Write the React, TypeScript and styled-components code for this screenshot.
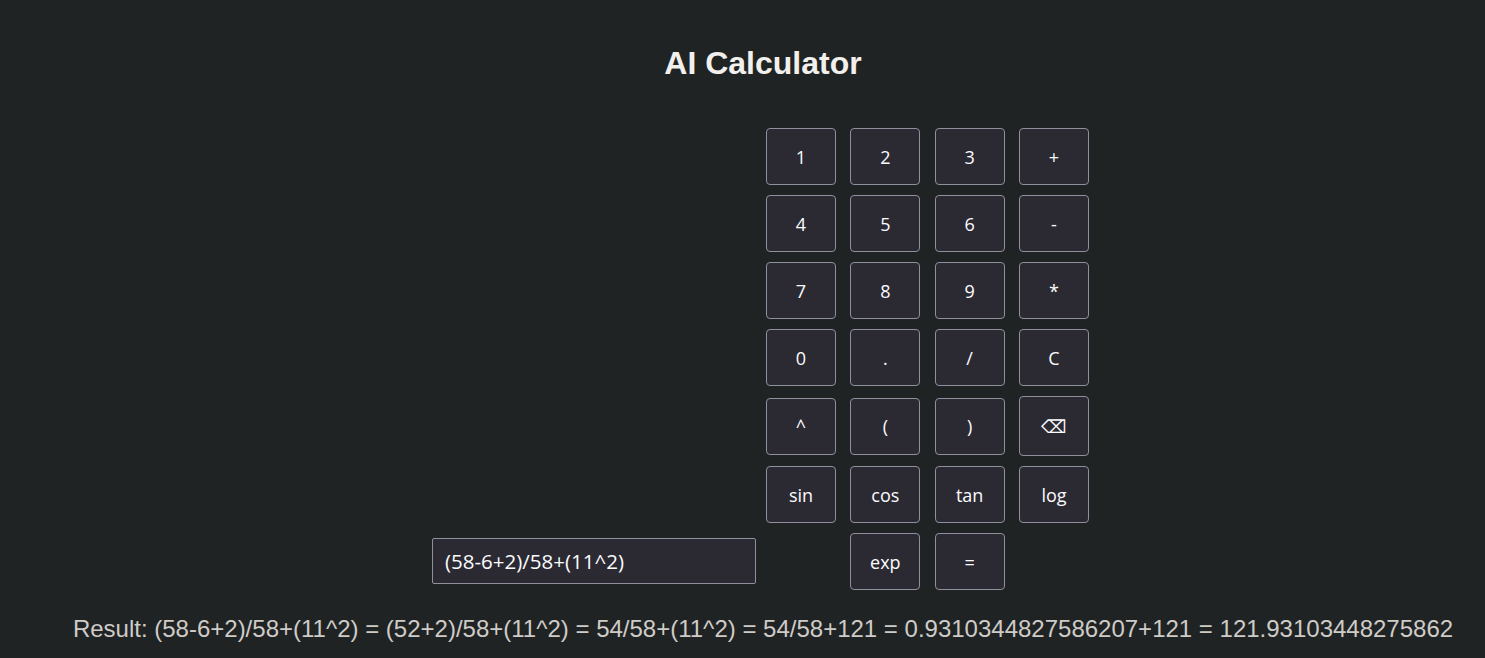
import React from "react";
import styled, { createGlobalStyle } from "styled-components";

const Global = createGlobalStyle`
  html, body { margin: 0; padding: 0; background: #202324; }
  body { font-family: "Liberation Sans", Arial, sans-serif; color: #e8e6e3; }
`;

const Page = styled.div`
  box-sizing: border-box;
  width: 1485px;
  padding: 45px 0 0 41px;
  display: flex;
  flex-direction: column;
  align-items: center;
`;

const Title = styled.h1`
  margin: 0;
  font-size: 32px;
  line-height: 36px;
  font-weight: 700;
  color: #f2f0ed;
`;

const CalcRow = styled.div`
  margin-top: 47px;
  display: flex;
  align-items: flex-end;
  gap: 10px;
  padding-right: 5px;
`;

const Expr = styled.input`
  box-sizing: border-box;
  width: 324px;
  height: 46px;
  margin-bottom: 6px;
  padding: 0 12px;
  background: #2b2a33;
  border: 1px solid #8f8f9d;
  border-radius: 2px;
  color: #fbfbfe;
  font-family: "Open Sans", "Noto Sans", sans-serif;
  font-size: 20.5px;
  outline: none;
`;

const Keys = styled.div`
  display: grid;
  grid-template-columns: repeat(4, 70px);
  column-gap: 14.33px;
  row-gap: 10px;
  align-items: center;
`;

const Key = styled.button<{ $tall?: boolean; $col?: number }>`
  box-sizing: border-box;
  width: 70px;
  height: ${(p) => (p.$tall ? 60 : 57)}px;
  ${(p) => (p.$col ? `grid-column-start: ${p.$col};` : "")}
  padding: 0;
  background: #2b2a33;
  border: 1px solid #8f8f9d;
  border-radius: 4px;
  color: #fbfbfe;
  font-family: "Open Sans", "Noto Sans", sans-serif;
  font-size: 18px;
  cursor: pointer;
  display: flex;
  align-items: center;
  justify-content: center;
`;

const Result = styled.p`
  margin: 25px 0 0;
  font-size: 24px;
  line-height: 28px;
  color: #cfccc8;
  white-space: nowrap;
`;

const keys: { label: string; tall?: boolean; col?: number }[] = [
  { label: "1" }, { label: "2" }, { label: "3" }, { label: "+" },
  { label: "4" }, { label: "5" }, { label: "6" }, { label: "-" },
  { label: "7" }, { label: "8" }, { label: "9" }, { label: "*" },
  { label: "0" }, { label: "." }, { label: "/" }, { label: "C" },
  { label: "^" }, { label: "(" }, { label: ")" }, { label: "⌫", tall: true },
  { label: "sin" }, { label: "cos" }, { label: "tan" }, { label: "log" },
  { label: "exp", col: 2 }, { label: "=" },
];

export default function App() {
  return (
    <>
      <Global />
      <Page>
        <Title>AI Calculator</Title>
        <CalcRow>
          <Expr defaultValue="(58-6+2)/58+(11^2)" />
          <Keys>
            {keys.map((k) => (
              <Key key={k.label} $tall={k.tall} $col={k.col}>
                {k.label}
              </Key>
            ))}
          </Keys>
        </CalcRow>
        <Result>
          Result: (58-6+2)/58+(11^2) = (52+2)/58+(11^2) = 54/58+(11^2) = 54/58+121 = 0.9310344827586207+121 = 121.93103448275862
        </Result>
      </Page>
    </>
  );
}
